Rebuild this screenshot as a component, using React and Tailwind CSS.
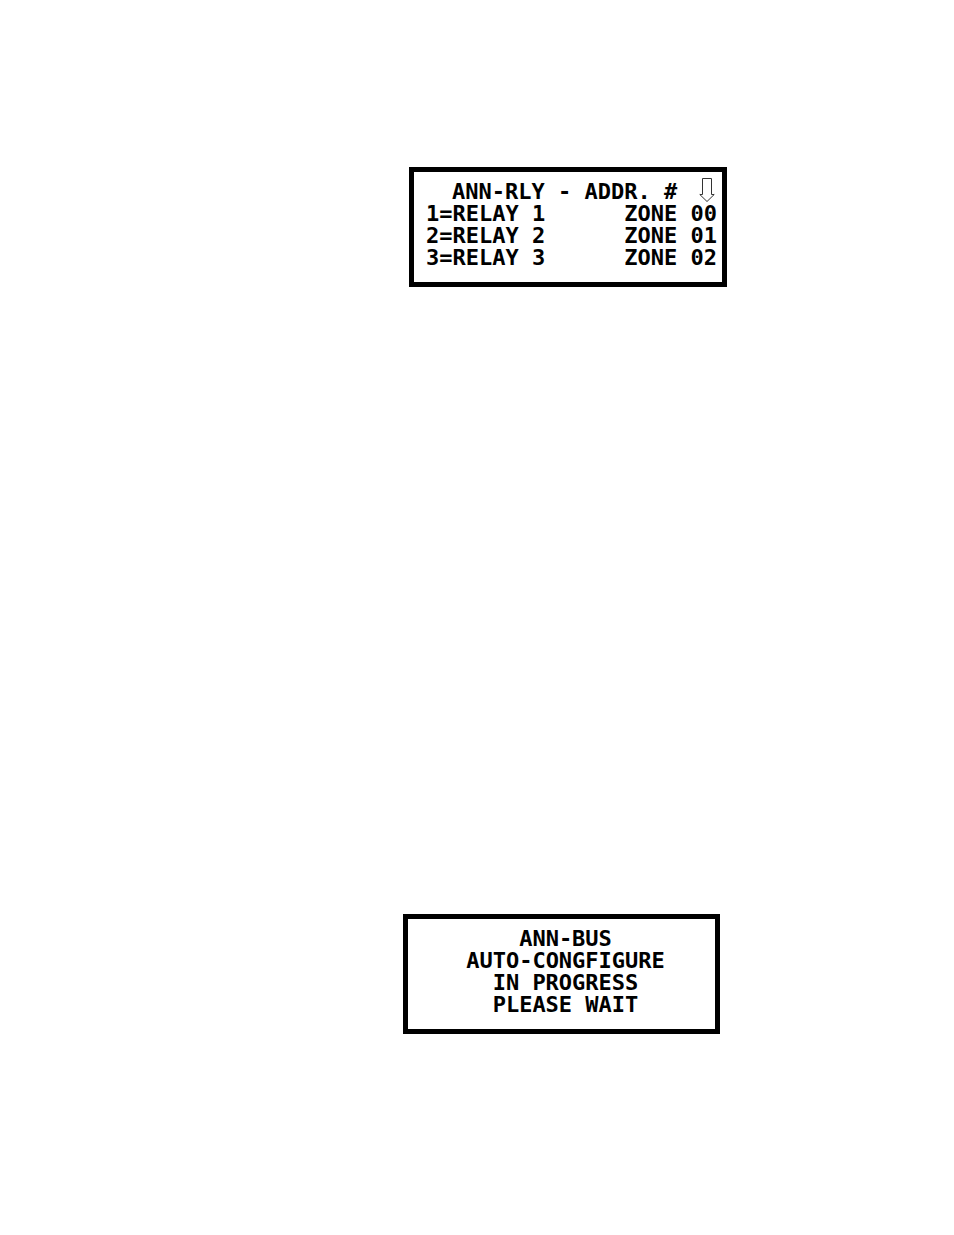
const relays = [
  { id: 1, zone: '00' },
  { id: 2, zone: '01' },
  { id: 3, zone: '02' },
];

const progressLines = ['ANN-BUS', 'AUTO-CONGFIGURE', 'IN PROGRESS', 'PLEASE WAIT'];

function DownArrow() {
  return (
    <svg
      className="mr-0.5 h-[25px] w-4 shrink-0"
      viewBox="0 0 16 25"
      fill="none"
      stroke="#333"
      strokeWidth="1"
      aria-label="More"
    >
      <path d="M3.5 0.5H12.5V16.5H15.2L8 23.5L0.8 16.5H3.5Z" />
    </svg>
  );
}

function LcdScreen({ children, className }) {
  return (
    <section
      className={`border-5 border-black bg-white pt-[9px] pb-[13px] text-[22px] leading-[22px] font-bold text-black font-['DejaVu_Sans_Mono','Liberation_Mono',monospace] ${className}`}
    >
      {children}
    </section>
  );
}

export default function App() {
  return (
    <main className="min-h-screen bg-white pt-[167px] pb-[200px]">
      <div className="flex flex-col gap-[627px] pl-[403px]">
        <LcdScreen className="ml-[6px] w-[318px] pl-3 pr-[5px]">
          <div className="flex h-[22px] items-end justify-between">
            <h2 className="pl-[26px] whitespace-nowrap">ANN-RLY - ADDR. #</h2>
            <DownArrow />
          </div>
          <ul>
            {relays.map((relay) => (
              <li key={relay.id} className="flex justify-between whitespace-nowrap">
                <span>{`${relay.id}=RELAY ${relay.id}`}</span>
                <span>{`ZONE ${relay.zone}`}</span>
              </li>
            ))}
          </ul>
        </LcdScreen>

        <LcdScreen className="w-[317px] pl-2 text-center">
          {progressLines.map((line) => (
            <p key={line}>{line}</p>
          ))}
        </LcdScreen>
      </div>
    </main>
  );
}
